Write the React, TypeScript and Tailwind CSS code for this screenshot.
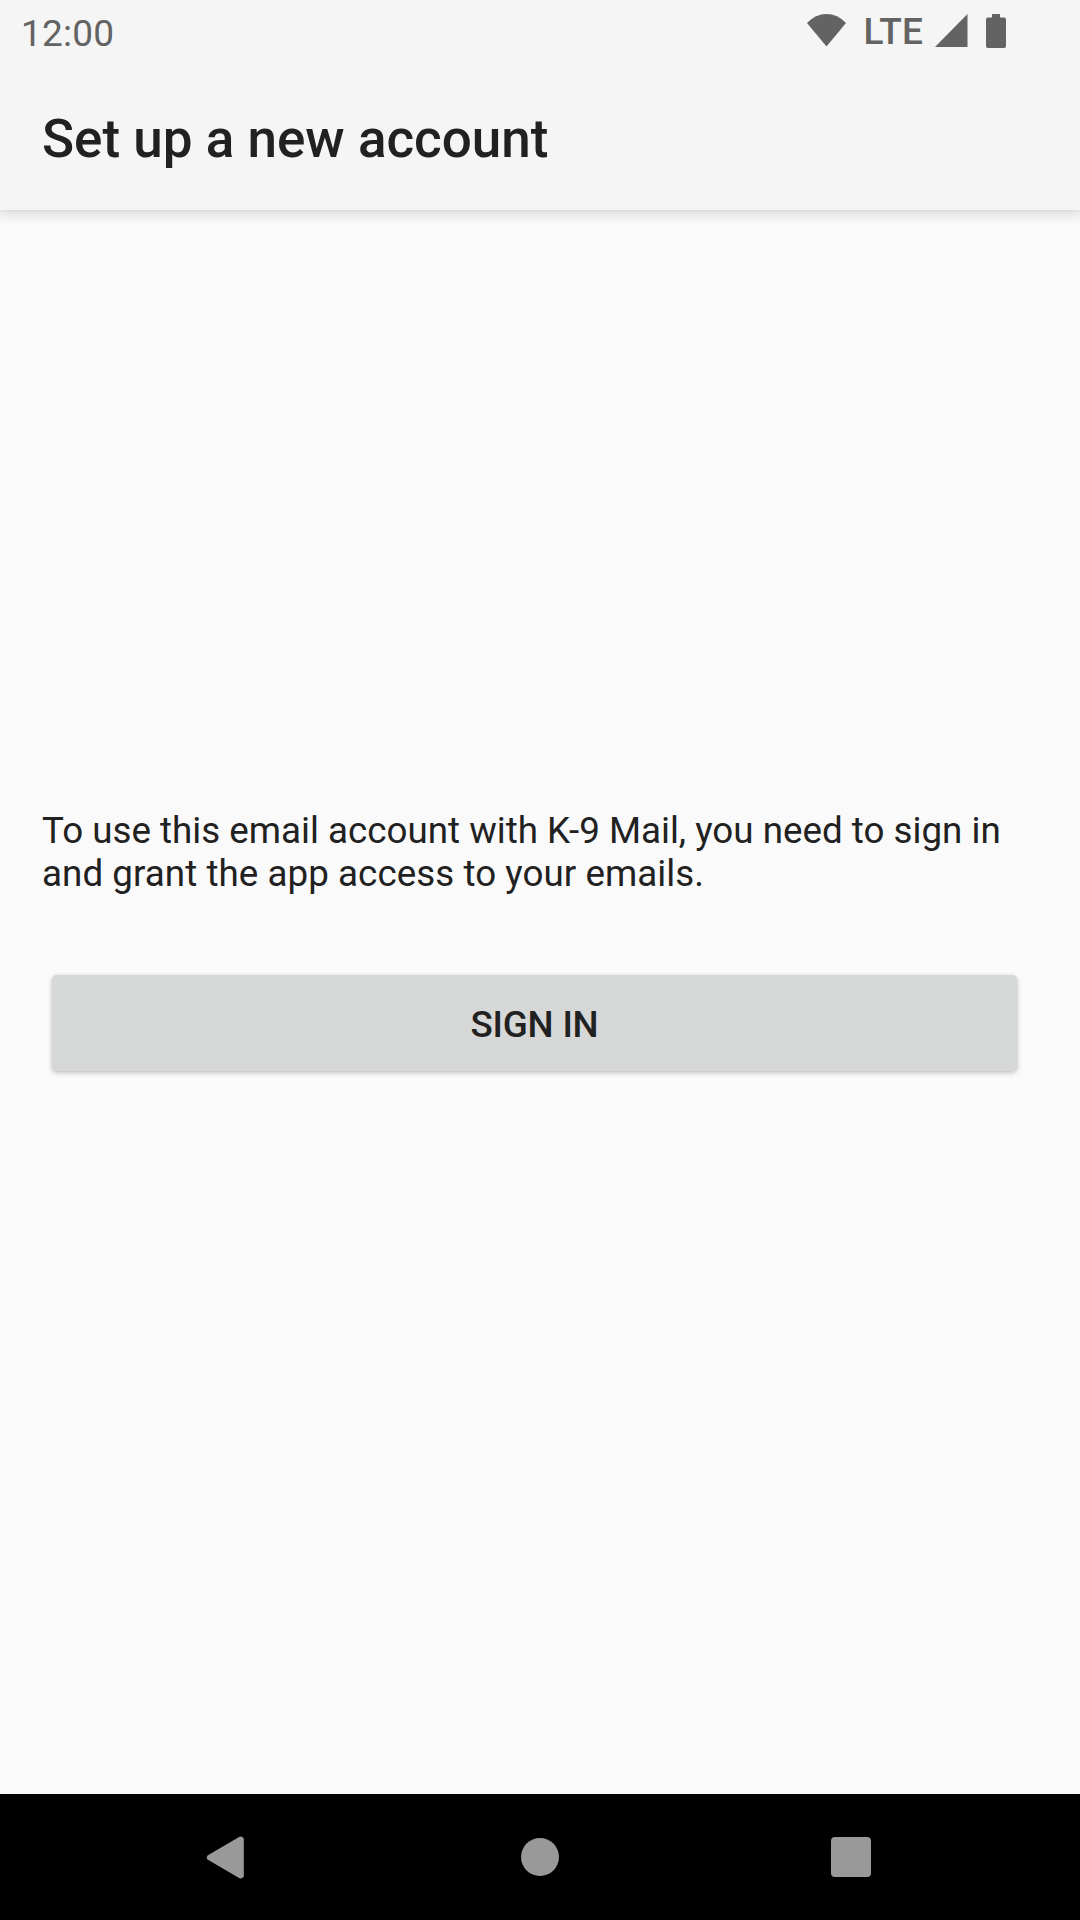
export default function App() {
  return (
    <div className="flex h-[1920px] w-[1080px] flex-col overflow-hidden bg-[#fafafa] font-[Roboto,sans-serif] text-[#212121]">
      <header className="z-10 h-[210px] shrink-0 bg-[#f5f5f5] shadow-[0_4px_10px_2px_rgba(0,0,0,0.1),0_0_3px_rgba(0,0,0,0.1)]">
        <div className="flex h-[63px] items-start justify-between pl-[21px] pr-[74px] text-[#636363]">
          <span className="mt-[12px] text-[37px] leading-[44px] tracking-[0.2px]">12:00</span>
          <div className="flex items-start">
            <svg className="mt-[14px] h-[33px] w-[39px]" viewBox="0 0 39 33" fill="currentColor"><path d="M19.5 32.5 0 9Q8.5 0 19.5 0T39 9Z" /></svg>
            <span className="ml-[17px] mt-[10px] text-[37px] font-medium leading-[44px] tracking-[0.2px]">LTE</span>
            <svg className="ml-[12px] mt-[14px] h-[33px] w-[33px]" viewBox="0 0 33 33" fill="currentColor"><path d="M0 33 32.5 0V33Z" /></svg>
            <svg className="ml-[18px] mt-[14px] h-[34px] w-[20px]" viewBox="0 0 20 34" fill="currentColor"><path d="M6 0H14V3.5H18Q20 3.5 20 5.5V32Q20 34 18 34H2Q0 34 0 32V5.5Q0 3.5 2 3.5H6Z" /></svg>
          </div>
        </div>
        <h1 className="flex h-[147px] items-center pl-[42px] pt-[4px] text-[53px] font-medium leading-[62px]">Set up a new account</h1>
      </header>
      <main className="flex-1 px-[42px] pt-[599px]">
        <p className="whitespace-nowrap text-[36.75px] leading-[43px]">To use this email account with K-9 Mail, you need to sign in<br /><span className="tracking-[0.05px]">and grant the app access to your emails.</span></p>
        <button className="ml-[10px] mt-[80px] flex h-[96px] w-[965px] items-center justify-center rounded-[5px] bg-[#d6d8d7] pt-[3px] text-[36.75px] font-medium tracking-[-0.2px] shadow-[0_2px_5px_rgba(0,0,0,0.22),0_0_3px_rgba(0,0,0,0.06)]">SIGN IN</button>
      </main>
      <nav className="flex h-[126px] shrink-0 items-center bg-black text-[#999999]">
        <svg className="ml-[206px] h-[43px] w-[38px]" viewBox="0 0 38 43" fill="currentColor"><path d="M1.5 19.5 33.5.7Q36 0 37.8 2.5V40.5Q36 43 33.5 42.3L1.5 23.5Q0 21.5 1.5 19.5Z" /></svg>
        <div className="ml-[277px] size-[38px] rounded-full bg-current" />
        <div className="ml-[272px] size-[40px] rounded-[4px] bg-current" />
      </nav>
    </div>
  );
}
